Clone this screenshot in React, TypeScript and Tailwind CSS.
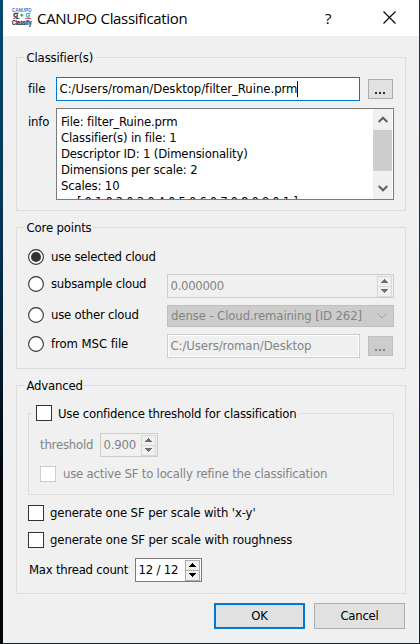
import type { ReactNode } from 'react';

function Group({ legend, legendClass, className, children }: { legend: ReactNode; legendClass: string; className: string; children: ReactNode }) {
  return (
    <fieldset className={`border border-[#dcdcdc] ${className}`}>
      <legend className={`h-[17px] leading-[17px] ${legendClass}`}>{legend}</legend>
      {children}
    </fieldset>
  );
}

function Radio({ label, checked = false, className = '' }: { label: string; checked?: boolean; className?: string }) {
  return (
    <label className={`flex h-4 items-center ${className}`}>
      <svg className="h-4 w-4 shrink-0" viewBox="0 0 16 16">
        <circle cx="8" cy="8" r="7.4" fill="#fff" stroke="#333" strokeWidth="1.1" />
        {checked && <circle cx="8" cy="8" r="5" fill="#333" />}
      </svg>
      <span className="ml-[7px]">{label}</span>
    </label>
  );
}

function Check({ label, disabled = false, gap = 'gap-1.5', className = '' }: { label: string; disabled?: boolean; gap?: string; className?: string }) {
  return (
    <label className={`flex h-4 items-center ${gap} ${className}`}>
      <span className={`h-4 w-4 shrink-0 border bg-white ${disabled ? 'border-[#ccc]' : 'border-[#333]'}`} />
      <span>{label}</span>
    </label>
  );
}

function Spin({ value, disabled = false, className }: { value: string; disabled?: boolean; className: string }) {
  const cell = `flex h-[11px] items-center justify-center border ${disabled ? 'border-[#d9d9d9] bg-[#f0f0f0]' : 'border-[#acacac] bg-[#f0f0f0]'}`;
  const ink = disabled ? '#6d6d6d' : '#000';
  return (
    <div className={`flex h-6 items-center justify-between border pr-px pl-[2.5px] ${disabled ? 'border-[#ccc] bg-[#f0f0f0] text-[#838383]' : 'border-[#7a7a7a] bg-white text-black'} ${className}`}>
      <span>{value}</span>
      <div className="flex w-[15px] flex-col">
        <div className={cell}>
          <svg width="7" height="4" viewBox="0 0 7 4" shapeRendering="crispEdges"><path d="M3 0h1v1h1v1h1v1h1v1H0V3h1V2h1V1h1z" fill={ink} /></svg>
        </div>
        <div className={`-mt-px ${cell}`}>
          <svg width="7" height="4" viewBox="0 0 7 4" shapeRendering="crispEdges"><path d="M0 0h7v1H6v1H5v1H4v1H3V3H2V2H1V1H0z" fill={ink} /></svg>
        </div>
      </div>
    </div>
  );
}

function Browse({ disabled = false }: { disabled?: boolean }) {
  return (
    <button className={`flex h-5 w-[25px] items-center justify-center gap-0.5 border pt-2 pr-px ${disabled ? 'border-[#bfbfbf] bg-[#ccc]' : 'border-[#adadad] bg-[#e1e1e1]'}`}>
      {[0, 1, 2].map((i) => (
        <span key={i} className={`h-0.5 w-0.5 ${disabled ? 'bg-[#838383]' : 'bg-[#1f2f40]'}`} />
      ))}
    </button>
  );
}

function Logo() {
  return (
    <svg className="mb-0.5 h-5 w-5 shrink-0 overflow-visible" viewBox="0 0 20 20" fontFamily="Liberation Sans, sans-serif" letterSpacing="0">
      <text x="0" y="4.500" fontSize="5" fontWeight="bold" fill="#4678c4" textLength="19.500" lengthAdjust="spacingAndGlyphs">CANUPO</text>
      <path d="M6.300 6.500H3Q2 6.500 2 8Q2 10 4 10H6M4.500 8.300h1.500" stroke="#444" strokeWidth="1.300" fill="none" />
      <path d="M8 8.200h3.500M9.700 6.700v3" stroke="#62a832" strokeWidth="1.300" fill="none" />
      <path d="M18.500 6.500H15.500Q14.300 6.500 14.300 8Q14.300 10 16 10h2M16 8.300h2" stroke="#35c2e6" strokeWidth="1.300" fill="none" />
      <path d="M1 11.500h2M13 11.500h6" stroke="#e65a5a" strokeWidth="1" />
      <path d="M3.500 11.500h4" stroke="#555" strokeWidth="1" />
      <text x="0" y="17.800" fontSize="6.400" fontWeight="bold" fill="#1d2438" stroke="#1d2438" strokeWidth="0.200" textLength="19.500" lengthAdjust="spacingAndGlyphs">Classify</text>
    </svg>
  );
}

const info = ['File: filter_Ruine.prm', 'Classifier(s) in file: 1', 'Descriptor ID: 1 (Dimensionality)', 'Dimensions per scale: 2', 'Scales: 10'];

export default function App() {
  return (
    <div className="flex h-[644px] w-[420px] overflow-hidden bg-[#1c1f24] text-[13px] leading-4 tracking-[-0.15px] whitespace-pre text-black [font-family:'DejaVu_Sans_Condensed','DejaVu_Sans',sans-serif]">
      <div className="w-[3px] shrink-0 bg-linear-to-b from-[#024a6f] via-[#03304f] via-40% to-[#02060b] to-75%" />
      <div className="flex h-[643px] w-[416px] shrink-0 flex-col bg-[#f0f0f0]">
        <header className="flex h-9 shrink-0 items-center bg-white pl-[9px]">
          <Logo />
          <h1 className="ml-[5px] w-[288px] text-[15px] tracking-[-0.32px] [font-family:'Open_Sans','Noto_Sans',sans-serif]">CANUPO Classification</h1>
          <span className="w-[12px] text-[15px] [font-family:'Open_Sans','Noto_Sans',sans-serif]">?</span>
          <svg className="mb-0.5 ml-[46px]" width="13" height="13" viewBox="0 0 13 13"><path d="M.5.5l12 12M12.500.5l-12 12" stroke="#000" strokeWidth="1.100" /></svg>
        </header>

        <main className="flex flex-col px-[13px] pt-[13px]">
          <Group legend="Classifier(s)" legendClass="w-[72px] pl-[2.5px]" className="h-[162px] pl-[7px]">
            <div className="mt-[11px] flex h-6 items-center pl-1">
              <span className="w-7">file</span>
              <div className="flex h-6 w-[304px] items-center border border-[#0078d7] bg-white pl-[2.5px] tracking-[-0.04px]">
                C:/Users/roman/Desktop/filter_Ruine.prm
                <span className="h-4 w-px bg-black" />
              </div>
              <div className="ml-2"><Browse /></div>
            </div>
            <div className="mt-[7px] flex pl-1">
              <span className="mt-[6px] w-7">info</span>
              <div className="flex h-[92px] w-[338px] overflow-hidden border border-[#7a7a7a] bg-white">
                <div className="h-[90px] flex-1 overflow-hidden pt-[5px] pl-1 tracking-[-0.17px]">
                  {info.map((line) => <div key={line} className="h-4">{line}</div>)}
                  <div className="h-4 pl-4 tracking-[-0.36px]">[ 0.1 0.2 0.3 0.4 0.5 0.6 0.7 0.8 0.9 0.1 ]</div>
                </div>
                <div className="mr-px flex w-[19px] flex-col items-center bg-[#f0f0f0]">
                  <svg className="mt-[7px]" width="10" height="7" viewBox="0 0 10 7"><path d="M.7 6L5 1.700 9.300 6" fill="none" stroke="#606060" strokeWidth="2" /></svg>
                  <div className="mt-[7px] h-[41px] w-full bg-[#cdcdcd]" />
                  <svg className="mt-[14px]" width="10" height="7" viewBox="0 0 10 7"><path d="M.7 1L5 5.300 9.300 1" fill="none" stroke="#606060" strokeWidth="2" /></svg>
                </div>
              </div>
            </div>
          </Group>

          <Group legend="Core points" legendClass="w-[69px] pl-[2.5px]" className="mt-2 h-[150px] pl-[7px]">
            <Radio label="use selected cloud" checked className="mt-[13px] ml-1 tracking-[-0.25px]" />
            <div className="mt-[9px] flex h-6 pl-1">
              <Radio label="subsample cloud" className="mt-[2px] w-[139px] tracking-[-0.24px]" />
              <Spin value="0.000000" disabled className="w-[227px] tracking-[-0.3px]" />
            </div>
            <div className="mt-[7px] flex h-[22px] pl-1">
              <Radio label="use other cloud" className="mt-[2px] w-[139px] tracking-[-0.22px]" />
              <div className="flex h-[22px] w-[227px] items-center justify-between border border-[#bfbfbf] bg-[#ccc] pr-1.5 pl-[3px] tracking-[-0.11px] text-[#838383]">
                dense - Cloud.remaining [ID 262]
                <svg width="10" height="6" viewBox="0 0 10 6"><path d="M.5.5L5 5 9.500.5" fill="none" stroke="#a0a0a0" /></svg>
              </div>
            </div>
            <div className="mt-[7px] flex h-6 pl-1">
              <Radio label="from MSC file" className="mt-[2px] w-[139px] tracking-[-0.07px]" />
              <div className="flex h-6 w-[193px] items-center border border-[#ccc] bg-[#f0f0f0] pl-[2.5px] tracking-[-0.08px] text-[#838383] shadow-[inset_0_0_0_1px_#fff]">C:/Users/roman/Desktop</div>
              <div className="mt-[2px] ml-2"><Browse disabled /></div>
            </div>
          </Group>

          <Group legend="Advanced" legendClass="w-[59px] pl-[2.5px]" className="mt-2 h-[217px] pl-[7px] tracking-[-0.2px]">
            <Group
              legend={<Check label="Use confidence threshold for classification" />}
              legendClass="w-[267px] pl-1 tracking-[-0.21px]"
              className="mt-[11px] ml-1 h-[90px] w-[366px] pl-[3px] text-[13px]"
            >
              <div className="mt-[11px] ml-2 flex h-6 items-center text-[#838383]">
                <span className="w-[60px] tracking-[-0.2px]">threshold</span>
                <Spin value="0.900" disabled className="w-[58px]" />
              </div>
              <Check label="use active SF to locally refine the classification" disabled gap="gap-[7px]" className="mt-[9px] ml-2 tracking-[-0.2px] text-[#838383]" />
            </Group>
            <Check label="generate one SF per scale with 'x-y'" className="mt-[10px] ml-1 tracking-[-0.12px]" />
            <Check label="generate one SF per scale with roughness" className="mt-[11px] ml-1 tracking-[-0.1px]" />
            <div className="mt-[10px] ml-[5px] flex h-6 items-center">
              <span className="w-[106px] tracking-[-0.24px]">Max thread count</span>
              <Spin value="12 / 12" className="w-[67px]" />
            </div>
          </Group>

          <div className="mt-[9px] flex gap-[9px] pl-[198px]">
            <button className="h-[26px] w-[91px] border-2 border-[#0078d7] bg-[#e1e1e1]">OK</button>
            <button className="h-[26px] w-[91px] border border-[#adadad] bg-[#e1e1e1] tracking-[-0.25px]">Cancel</button>
          </div>
        </main>
      </div>
      <div className="w-px shrink-0 bg-linear-to-b from-[#1f3340] via-[#1a1a55] via-70% to-[#20232a] to-85%" />
    </div>
  );
}
